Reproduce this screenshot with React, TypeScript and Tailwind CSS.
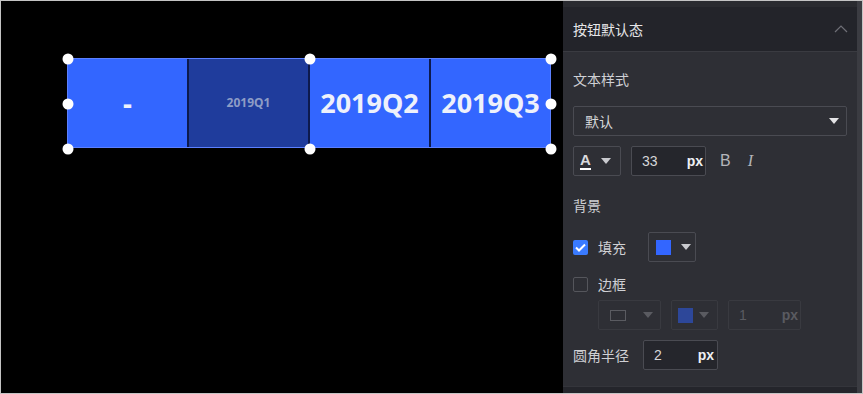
import React from 'react';

// ============================================
// Tab button editor - canvas + style panel
// ============================================

const font = { fontFamily: '"Microsoft YaHei", "Noto Sans", "Noto Sans CJK SC", sans-serif' };

function Triangle({ color = '#c9cacf' }: { color?: string }) {
  return (
    <svg width="10" height="6" viewBox="0 0 10 6">
      <path d="M0 0 L10 0 L5 6 Z" fill={color} />
    </svg>
  );
}

function Handle({ className }: { className: string }) {
  return <div className={`absolute w-[11px] h-[11px] rounded-full bg-white -translate-x-1/2 -translate-y-1/2 ${className}`} />;
}

function Canvas() {
  return (
    <div className="relative w-[562px] h-full bg-black">
      <div className="absolute left-[66px] top-[57px] w-[484px] h-[90px] border border-[#5c80ff] flex">
        <div className="w-[119px] flex items-center justify-center bg-[#3366ff] text-[28px] font-bold text-[#eef1fb]">-</div>
        <div className="w-[2px] bg-[#0d1a4d]" />
        <div className="w-[119px] flex items-center justify-center bg-[#1f3c9c] text-[12px] font-bold text-[#8e9cc6]">2019Q1</div>
        <div className="w-[2px] bg-[#0d1a4d]" />
        <div className="w-[119px] flex items-center justify-center bg-[#3366ff] text-[27px] font-bold text-[#eef1fb]">2019Q2</div>
        <div className="w-[2px] bg-[#0d1a4d]" />
        <div className="flex-1 flex items-center justify-center bg-[#3366ff] text-[27px] font-bold text-[#eef1fb]">2019Q3</div>
      </div>
      <Handle className="left-[67px] top-[58px]" />
      <Handle className="left-[309px] top-[58px]" />
      <Handle className="left-[550px] top-[58px]" />
      <Handle className="left-[67px] top-[103px]" />
      <Handle className="left-[550px] top-[103px]" />
      <Handle className="left-[67px] top-[148px]" />
      <Handle className="left-[309px] top-[148px]" />
      <Handle className="left-[550px] top-[148px]" />
    </div>
  );
}

function Panel() {
  return (
    <div className="w-[294px] h-full flex flex-col bg-[#2e2f35] text-[14px]">
      <div className="h-[6px] bg-[#2a2b30]" />
      <div className="h-[45px] flex items-center justify-between pl-[10px] pr-[8px] bg-[#23242a] border-b border-[#3a3b41] text-[#e6e6e8]">
        <span>按钮默认态</span>
        <svg width="14" height="8" viewBox="0 0 14 8" className="mr-[1px]">
          <path d="M1 7 L7 1 L13 7" fill="none" stroke="#6f7077" strokeWidth="1.2" />
        </svg>
      </div>
      <div className="flex-1 flex flex-col px-[10px] text-[#cfd0d4]">
        <div className="mt-[17px] h-[20px] flex items-center">文本样式</div>
        <div className="mt-[17px] h-[30px] w-[274px] border border-[#4a4b52] rounded-[2px] flex items-center justify-between pl-[11px] pr-[7px] text-[#d6d7da]">
          <span>默认</span>
          <Triangle color="#e4e4e6" />
        </div>
        <div className="mt-[10px] flex items-center h-[30px]">
          <div className="w-[48px] h-[30px] border border-[#4a4b52] rounded-[2px] flex items-center gap-[10px] pl-[6px]">
            <span className="text-[15px] font-bold leading-none border-b-2 border-white text-[#d9d9dc] pb-[1px]" style={{ fontFamily: '"Liberation Sans", sans-serif' }}>A</span>
            <Triangle />
          </div>
          <div className="ml-[10px] w-[75px] h-[30px] border border-[#4a4b52] rounded-[2px] flex items-center justify-between pl-[10px] pr-[2px] bg-[#25262c]" style={{ fontFamily: '"Liberation Sans", sans-serif' }}>
            <span className="text-[#d6d7da]">33</span>
            <span className="font-bold text-[#eef0f4]">px</span>
          </div>
          <span className="ml-[14px] text-[16px] text-[#b4b5ba]" style={{ fontFamily: '"Liberation Sans", sans-serif' }}>B</span>
          <span className="ml-[17px] text-[16px] italic text-[#b4b5ba]" style={{ fontFamily: '"Liberation Serif", serif' }}>I</span>
        </div>
        <div className="mt-[19px] h-[20px] flex items-center">背景</div>
        <div className="mt-[17px] h-[30px] flex items-center">
          <div className="w-[15px] h-[15px] rounded-[2px] bg-[#3a7bff] flex items-center justify-center">
            <svg width="11" height="9" viewBox="0 0 11 9">
              <path d="M1 4.5 L4 7.5 L10 1.5" fill="none" stroke="white" strokeWidth="2" />
            </svg>
          </div>
          <span className="ml-[10px]">填充</span>
          <div className="ml-[22px] w-[48px] h-[30px] border border-[#4a4b52] rounded-[2px] flex items-center gap-[10px] pl-[7px]">
            <div className="w-[15px] h-[15px] bg-[#3366ff]" />
            <Triangle />
          </div>
        </div>
        <div className="mt-[7px] h-[30px] flex items-center">
          <div className="w-[15px] h-[15px] rounded-[2px] border border-[#55565c]" />
          <span className="ml-[10px]">边框</span>
        </div>
        <div className="mt-[1px] h-[30px] flex items-center pl-[25px] text-[#5a5b61]">
          <div className="w-[63px] h-[30px] border border-[#393a40] rounded-[2px] flex items-center gap-[17px] pl-[11px]">
            <div className="w-[16px] h-[11px] border border-[#5a5b61]" />
            <Triangle color="#5a5b61" />
          </div>
          <div className="ml-[10px] w-[47px] h-[30px] border border-[#393a40] rounded-[2px] flex items-center gap-[6px] pl-[6px]">
            <div className="w-[15px] h-[15px] bg-[#2d4799]" />
            <Triangle color="#5a5b61" />
          </div>
          <div className="ml-[10px] w-[73px] h-[30px] border border-[#393a40] rounded-[2px] flex items-center justify-between pl-[10px] pr-[2px]" style={{ fontFamily: '"Liberation Sans", sans-serif' }}>
            <span>1</span>
            <span className="font-bold">px</span>
          </div>
        </div>
        <div className="mt-[10px] h-[30px] flex items-center">
          <span>圆角半径</span>
          <div className="ml-[14px] w-[75px] h-[30px] border border-[#4a4b52] rounded-[2px] flex items-center justify-between pl-[10px] pr-[3px] bg-[#25262c]" style={{ fontFamily: '"Liberation Sans", sans-serif' }}>
            <span className="text-[#d6d7da]">2</span>
            <span className="font-bold text-[#eef0f4]">px</span>
          </div>
        </div>
      </div>
      <div className="h-[7px] bg-[#24252b] border-t border-[#34353b]" />
    </div>
  );
}

export default function App() {
  return (
    <div className="w-[863px] h-[394px] border border-[#c4c4c4] flex bg-black" style={font}>
      <Canvas />
      <Panel />
      <div className="w-[5px] h-full bg-[#3b3c42]" />
    </div>
  );
}
